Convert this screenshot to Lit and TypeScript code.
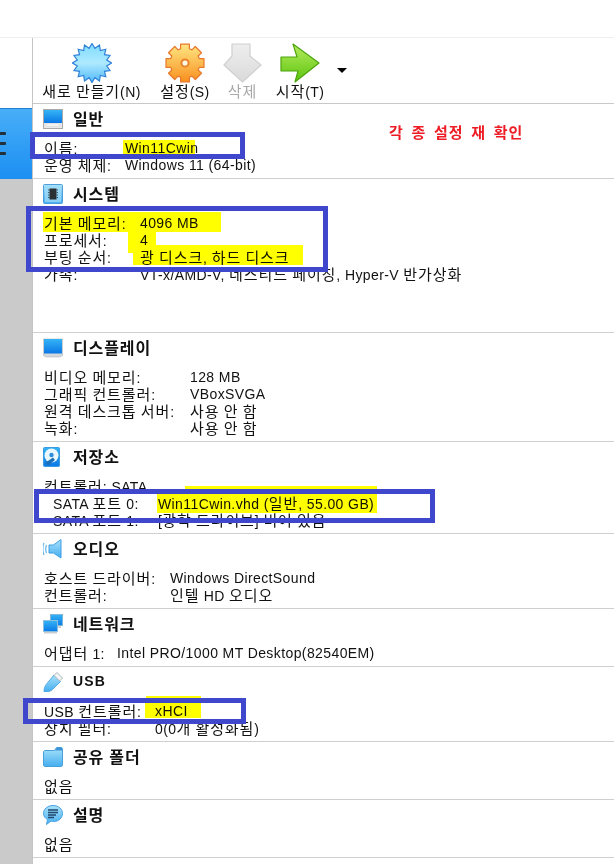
import { LitElement, html, css, svg } from "lit";
import { customElement } from "lit/decorators.js";

const starPoints = (() => {
  const pts: string[] = [];
  const n = 16;
  for (let i = 0; i < n * 2; i++) {
    const r = i % 2 === 0 ? 19.5 : 15;
    const a = (Math.PI * i) / n - Math.PI / 2;
    pts.push(`${(20 + r * Math.cos(a)).toFixed(1)},${(20 + r * Math.sin(a)).toFixed(1)}`);
  }
  return pts.join(" ");
})();

const gearPath = (() => {
  const n = 8;
  const out: string[] = [];
  for (let i = 0; i < n; i++) {
    const c = (Math.PI * 2 * i) / n - Math.PI / 2;
    const p = (a: number, r: number) =>
      `${(19.5 + r * Math.cos(a)).toFixed(1)},${(19.5 + r * Math.sin(a)).toFixed(1)}`;
    out.push(p(c - 0.3, 14.5), p(c - 0.23, 19), p(c + 0.23, 19), p(c + 0.3, 14.5));
  }
  return out.join(" ");
})();

const defs = svg`
  <linearGradient id="scr" x1="0" y1="0" x2="0" y2="1"><stop offset="0" stop-color="#35b4f5"/><stop offset="1" stop-color="#0a78e6"/></linearGradient>
  <linearGradient id="pale" x1="0" y1="0" x2="0" y2="1"><stop offset="0" stop-color="#a9e2fb"/><stop offset="1" stop-color="#45aeef"/></linearGradient>
`;

const icons: Record<string, unknown> = {
  general: svg`<rect x="0.5" y="0.5" width="19" height="19" fill="#e9e9e9" stroke="#a9a9a9"/><rect x="1" y="1" width="18" height="13" fill="url(#scr)"/><rect x="3" y="15" width="14" height="2" fill="#fff" stroke="#c9c9c9" stroke-width=".5"/>`,
  system: svg`<rect x="0.5" y="0.5" width="19" height="19" rx="1" fill="url(#pale)" stroke="#4c9fdc"/><rect x="2" y="2" width="16" height="16" fill="#9fdcf8" opacity=".7"/><rect x="6.500" y="4.500" width="7" height="11" fill="#2a2f33"/><path d="M5 6h1.500M5 8.500h1.500M5 11h1.500M5 13.500h1.500M13.500 6H15M13.500 8.500H15M13.500 11H15M13.500 13.500H15" stroke="#3d5665" stroke-width="1"/>`,
  display: svg`<path d="M0 1h20v16l-3 2H3l-3-2z" fill="#d4d8da" stroke="#aeb4b8" stroke-width=".6"/><rect x="1" y="1" width="18" height="14.500" fill="url(#scr)"/>`,
  storage: svg`<rect x="0.5" y="0.5" width="16" height="19" rx="1" fill="url(#scr)" stroke="#3b9be0"/><circle cx="8.500" cy="8.500" r="7" fill="#eaf7fe"/><circle cx="8.500" cy="8" r="2.200" fill="#2a8edc"/><path d="M2 16 L10 10.500 L12 13 L5 18.500z" fill="#1a6fb8"/>`,
  audio: svg`<path d="M6 6h4.500L18 0.500v18.500L10.500 14H6z" fill="url(#pale)" stroke="#3f9fe4" stroke-width="1"/><path d="M3.500 6c-1 2.500-1 5.500 0 8M1 4c-1.500 3-1.500 9 0 12" fill="none" stroke="#6dbcf0" stroke-width="1.300"/>`,
  network: svg`<rect x="7.500" y="0.500" width="12" height="11" fill="url(#scr)" stroke="#7fb6dc"/><rect x="9" y="12" width="9" height="2" fill="#cfd4d6"/><rect x="0.500" y="6.500" width="14" height="11" fill="url(#scr)" stroke="#8cc0e0"/><path d="M1 18h13v1.500H1z" fill="#c9cdd0"/>`,
  usb: svg`<path d="M11 3l6.500 6.500-8 8c-2 2-6 3-8.500 2 0-3 1-6 3-8z" fill="url(#pale)" stroke="#4aa3e2" stroke-width=".9"/><path d="M14 0.500l5.500 5.500-3 3-5.500-5.500z" fill="#f2f4f5" stroke="#9aa4aa" stroke-width=".8"/>`,
  folder: svg`<path d="M0.500 4.500l1-1h10l2-3h5l1 1v17l-1 1H1.500l-1-1z" fill="url(#pale)" stroke="#4aa0dd"/><path d="M12 3.500l2-3h5v3z" fill="#3c94d8"/>`,
  note: svg`<path d="M10 0.500c5.500 0 9.500 3.500 9.500 8s-4 8-8.500 8c-1 0-2 0-3-.4L3.500 19.500l1-4.800C2 13 .5 11 .5 8.500 .5 4 4.500.5 10 .5z" fill="url(#pale)" stroke="#4aa3e2"/><path d="M5 5h10M5 7.500h10M5 10h8M5 12.500h6" stroke="#22496e" stroke-width="1.300"/>`,
};

const smallIcon = (name: string) => html`<svg class="sicon" width="20" height="20" viewBox="0 0 20 20"><defs>${defs}</defs>${icons[name]}</svg>`;

/* Hangul runs get their own size and spacing; Latin stays tighter. */
const t = (text: string) =>
  text.split(/([\uAC00-\uD7A3]+)/).map((part, i) => (i % 2 ? html`<span class="k">${part}</span>` : part));

interface Section { icon: string; title: string; cols: string; extra?: string; rows: [string, string?, string?][]; }

const sections: Section[] = [
  { icon: "general", title: "일반", cols: "c81", rows: [["이름:", "Win11Cwin"], ["운영 체제:", "Windows 11 (64-bit)"]] },
  { icon: "system", title: "시스템", cols: "c96", extra: "tall", rows: [["기본 메모리:", "4096 MB"], ["프로세서:", "4"], ["부팅 순서:", "광 디스크, 하드 디스크"], ["가속:", "VT-x/AMD-V, 네스티드 페이징, Hyper-V 반가상화"]] },
  { icon: "display", title: "디스플레이", cols: "c146", rows: [["비디오 메모리:", "128 MB"], ["그래픽 컨트롤러:", "VBoxSVGA"], ["원격 데스크톱 서버:", "사용 안 함"], ["녹화:", "사용 안 함"]] },
  { icon: "storage", title: "저장소", cols: "c96", rows: [["컨트롤러: SATA", undefined, "full"], ["SATA 포트 0:", "Win11Cwin.vhd (일반, 55.00 GB)", "ind"], ["SATA 포트 1:", "[광학 드라이브] 비어 있음", "ind"]] },
  { icon: "audio", title: "오디오", cols: "c126", rows: [["호스트 드라이버:", "Windows DirectSound"], ["컨트롤러:", "인텔 HD 오디오"]] },
  { icon: "network", title: "네트워크", cols: "c73", rows: [["어댑터 1:", "Intel PRO/1000 MT Desktop(82540EM)"]] },
  { icon: "usb", title: "USB", cols: "c111", rows: [["USB 컨트롤러:", "xHCI"], ["장치 필터:", "0(0개 활성화됨)"]] },
  { icon: "folder", title: "공유 폴더", cols: "c81", rows: [["없음", undefined, "full"]] },
  { icon: "note", title: "설명", cols: "c81", rows: [["없음", undefined, "full"]] },
];

@customElement("app-root")
export class AppRoot extends LitElement {
  static styles = css`
    :host { display: block; width: 614px; height: 864px; overflow: hidden; background: #fff; position: relative;
      font-family: "Liberation Sans", "Noto Sans CJK KR", sans-serif; font-size: 14px; color: #111; }
    * { box-sizing: border-box; }
    .k { font-size: 15px; letter-spacing: .9px; }
    .top { height: 38px; border-bottom: 1px solid #eeeeee; }
    .body { display: flex; height: 826px; }
    .rail { width: 33px; flex: none; display: flex; flex-direction: column; border-right: 1px solid #c4c4c4; }
    .rail .sp { height: 70px; background: #fff; }
    .sel { height: 71px; background: linear-gradient(#48aef8, #1c8ff2); border-top: 1px solid #1f7fd0; display: flex; flex-direction: column; gap: 7px; padding-top: 23px; }
    .sel i { display: block; width: 6px; height: 3px; background: #23303a; border-radius: 0 1px 1px 0; }
    .rest { flex: 1; background: #cacaca; }
    .main { flex: 1; min-width: 0; display: flex; flex-direction: column; }
    .toolbar { height: 66px; border-bottom: 1px solid #c8c8c8; display: flex; padding: 5px 0 0 9px; }
    .tool { display: flex; flex-direction: column; align-items: center; white-space: nowrap; letter-spacing: .4px; }
    .tool svg { flex: none; display: block; }
    .tool .lbl { line-height: 18px; }
    .t1 { width: 99px; }
    .t2 { width: 52px; margin-left: 18px; }
    .t3 { width: 39px; margin-left: 12px; color: #a8a8a8; }
    .t4 { width: 48px; margin-left: 14px; }
    .caret { width: 0; height: 0; margin: 25px 0 0 13px; border-left: 5px solid transparent; border-right: 5px solid transparent; border-top: 5px solid #000; }
    .sec { border-bottom: 1px solid #cfcfcf; padding: 5px 0 4px 11px; }
    .sec.tall { padding-bottom: 49px; }
    .head { display: flex; align-items: center; height: 20px; gap: 10px; margin: 0 0 11px -1px; font-weight: 700; font-size: 14px; letter-spacing: 1.2px; }
    .head .ttl { padding-bottom: 3px; }
    .head .k { font-size: 16px; letter-spacing: .9px; }
    .sicon { flex: none; display: block; }
    .row { display: grid; height: 17px; line-height: 17px; white-space: nowrap; letter-spacing: .4px; }
    .c73 { grid-template-columns: 73px 1fr; }
    .c81 { grid-template-columns: 81px 1fr; }
    .c96 { grid-template-columns: 96px 1fr; }
    .c111 { grid-template-columns: 111px 1fr; }
    .c126 { grid-template-columns: 126px 1fr; }
    .c146 { grid-template-columns: 146px 1fr; }
    .row.ind { padding-left: 9px; grid-template-columns: 105px 1fr; }
    .mark, .box, .note { position: absolute; }
    .mark { background: #ffff00; mix-blend-mode: multiply; }
    .box { border: 5px solid #3f48cc; }
    .note { left: 389px; top: 124px; color: #ed1c24; font-weight: 700; font-size: 14px; line-height: 18px; letter-spacing: .4px; word-spacing: 3.5px; white-space: nowrap; }
    .m1 { left: 123px; top: 140px; width: 72px; height: 14px; }
    .m2 { left: 43px; top: 212px; width: 178px; height: 20px; }
    .m3 { left: 128px; top: 232px; width: 28px; height: 21px; }
    .m4 { left: 133px; top: 245px; width: 170px; height: 20px; }
    .m5 { left: 157px; top: 493px; width: 220px; height: 20px; }
    .m6 { left: 185px; top: 486px; width: 192px; height: 4px; }
    .m7 { left: 145px; top: 703px; width: 56px; height: 15px; }
    .m8 { left: 146px; top: 696px; width: 55px; height: 3px; }
    .b1 { left: 30px; top: 132px; width: 215px; height: 27px; }
    .b2 { left: 26px; top: 206px; width: 302px; height: 66px; }
    .b3 { left: 34px; top: 489px; width: 401px; height: 34px; }
    .b4 { left: 23px; top: 698px; width: 223px; height: 26px; }
  `;

  render() {
    return html`
      <div class="top"></div>
      <div class="body">
        <div class="rail">
          <div class="sp"></div>
          <div class="sel"><i></i><i></i><i></i></div>
          <div class="rest"></div>
        </div>
        <div class="main">
          <div class="toolbar">
            <div class="tool t1">
              <svg width="40" height="40" viewBox="0 0 40 40"><defs><linearGradient id="st" x1="0" y1="0" x2="0" y2="1"><stop offset="0" stop-color="#7fdcff"/><stop offset=".5" stop-color="#aeeaff"/><stop offset="1" stop-color="#4fb8f8"/></linearGradient></defs><polygon points=${starPoints} fill="url(#st)" stroke="#2f82d8" stroke-width="1.200"/></svg>
              <span class="lbl">${t("새로 만들기(N)")}</span>
            </div>
            <div class="tool t2">
              <svg width="40" height="40" viewBox="0 0 39 39"><defs><linearGradient id="ge" x1="0" y1="0" x2="0" y2="1"><stop offset="0" stop-color="#ffe784"/><stop offset="1" stop-color="#f98f1e"/></linearGradient></defs><polygon points=${gearPath} fill="url(#ge)" stroke="#e8782a" stroke-width="1.200" stroke-linejoin="round"/><circle cx="19.500" cy="19.500" r="3.500" fill="#fffbe8" stroke="#e8842c" stroke-width="2"/></svg>
              <span class="lbl">${t("설정(S)")}</span>
            </div>
            <div class="tool t3">
              <svg width="39" height="40" viewBox="0 0 39 40"><defs><linearGradient id="gr" x1="0" y1="0" x2="0" y2="1"><stop offset="0" stop-color="#eeeeee"/><stop offset="1" stop-color="#dadada"/></linearGradient></defs><polygon points="9,1 27,1 27,13 38,22 19.500,39 1,22 9,13" fill="url(#gr)" stroke="#d0d0d0" stroke-width="1.200" stroke-linejoin="round"/></svg>
              <span class="lbl">${t("삭제")}</span>
            </div>
            <div class="tool t4">
              <svg width="40" height="40" viewBox="0 0 40 40"><defs><linearGradient id="gn" x1="0" y1="0" x2="0" y2="1"><stop offset="0" stop-color="#b6ec5e"/><stop offset="1" stop-color="#5cc40e"/></linearGradient></defs><polygon points="1,14 17,14 13,1 39,20 15,39 18,28 1,28" fill="url(#gn)" stroke="#4da50e" stroke-width="1.200" stroke-linejoin="round"/></svg>
              <span class="lbl">${t("시작(T)")}</span>
            </div>
            <div class="caret"></div>
          </div>
          ${sections.map((s) => html`
            <section class="sec ${s.extra ?? ""}">
              <div class="head">${smallIcon(s.icon)}<span class="ttl">${t(s.title)}</span></div>
              ${s.rows.map((r) => html`<div class="row ${s.cols} ${r[2] ?? ""}"><span>${t(r[0])}</span>${r[1] ? html`<span>${t(r[1])}</span>` : ""}</div>`)}
            </section>`)}
        </div>
      </div>
      <div class="note">${t("각 종 설정 재 확인")}</div>
      ${[1, 2, 3, 4, 5, 6, 7, 8].map((i) => html`<div class="mark m${i}"></div>`)}
      ${[1, 2, 3, 4].map((i) => html`<div class="box b${i}"></div>`)}
    `;
  }
}
